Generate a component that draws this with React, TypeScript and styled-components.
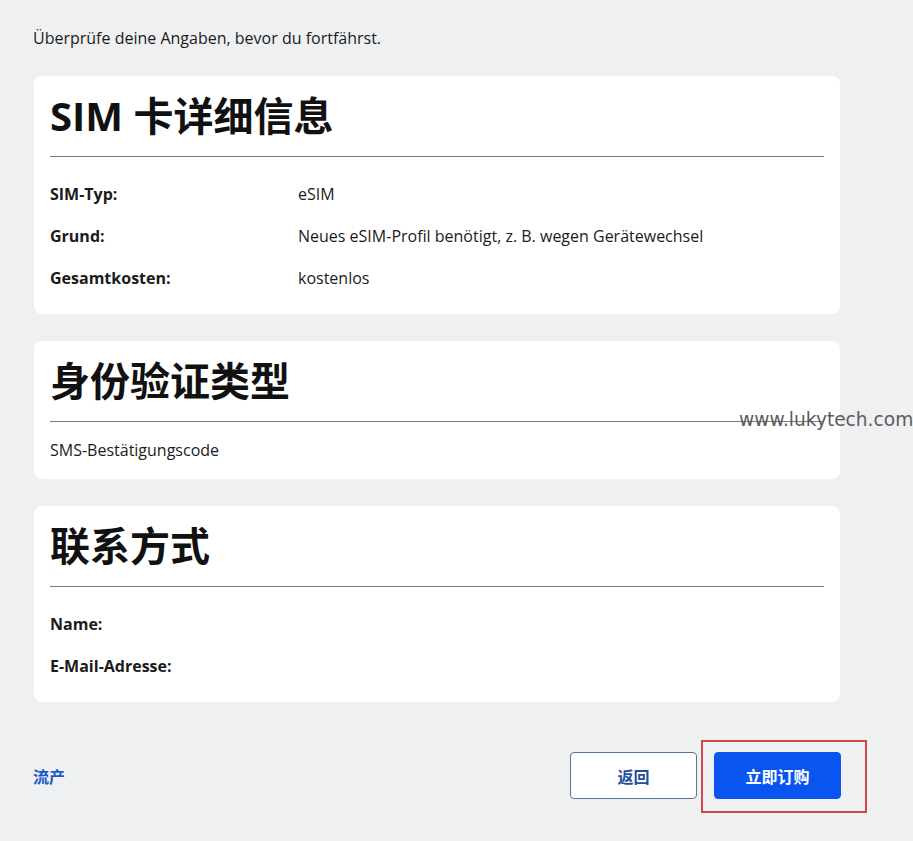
import styled, { createGlobalStyle } from 'styled-components';

const GlobalStyle = createGlobalStyle`
  html, body {
    margin: 0;
    padding: 0;
    background: #eff0f2;
  }
  body {
    font-family: 'Open Sans', 'Noto Sans CJK SC', sans-serif;
    color: #1b1b1b;
  }
`;

const rows = [
  { label: 'SIM-Typ:', value: 'eSIM' },
  { label: 'Grund:', value: 'Neues eSIM-Profil benötigt, z. B. wegen Gerätewechsel' },
  { label: 'Gesamtkosten:', value: 'kostenlos' },
];

const contactRows = [
  { label: 'Name:', value: '' },
  { label: 'E-Mail-Adresse:', value: '' },
];

const App = () => {
  return (
    <Page>
      <GlobalStyle />
      <Intro>Überprüfe deine Angaben, bevor du fortfährst.</Intro>
      <Cards>
        <Card>
          <CardTitle>SIM 卡详细信息</CardTitle>
          <Divider />
          {rows.map((row) => (
            <Row key={row.label}>
              <Label>{row.label}</Label>
              <Value>{row.value}</Value>
            </Row>
          ))}
        </Card>
        <Card>
          <CardTitle>身份验证类型</CardTitle>
          <Divider />
          <PlainText>SMS-Bestätigungscode</PlainText>
        </Card>
        <Card>
          <CardTitle>联系方式</CardTitle>
          <Divider />
          {contactRows.map((row) => (
            <Row key={row.label}>
              <Label>{row.label}</Label>
              <Value>{row.value}</Value>
            </Row>
          ))}
        </Card>
      </Cards>
      <Footer>
        <CancelLink href="#">流产</CancelLink>
        <Actions>
          <Button>返回</Button>
          <Highlighted>
            <Button $primary>立即订购</Button>
          </Highlighted>
        </Actions>
      </Footer>
      <Watermark>www.lukytech.com</Watermark>
    </Page>
  );
};

export default App;

const Page = styled.div`
  position: relative;
  width: 806px;
  padding: 26px 0 40px 34px;
`;

const Intro = styled.p`
  margin: 0 0 26px -1px;
  font-size: 16px;
  line-height: 24px;
  color: #1b1b1b;
`;

const Cards = styled.div`
  display: flex;
  flex-direction: column;
  gap: 27px;
`;

const Card = styled.section`
  background: #ffffff;
  border-radius: 8px;
  padding: 16px 16px 15px 16px;
`;

const CardTitle = styled.h2`
  margin: 0;
  font-size: 40px;
  line-height: 48px;
  font-weight: 700;
  font-family: 'Open Sans', 'Noto Sans CJK SC', sans-serif;
  color: #111111;
`;

const Divider = styled.hr`
  margin: 16px 0 16px 0;
  border: none;
  border-top: 1px solid #7c7c7c;
`;

const Row = styled.div`
  display: grid;
  grid-template-columns: 248px 1fr;
  padding: 9px 0;
  font-size: 16px;
  line-height: 24px;
`;

const Label = styled.span`
  font-weight: 700;
  color: #1b1b1b;
`;

const Value = styled.span`
  color: #1b1b1b;
`;

const PlainText = styled.p`
  margin: 0 0 2px 0;
  font-size: 16px;
  line-height: 24px;
`;

const Footer = styled.div`
  display: flex;
  align-items: center;
  justify-content: space-between;
  margin-top: 50px;
`;

const CancelLink = styled.a`
  margin-left: -1px;
  font-size: 16px;
  font-weight: 700;
  color: #1d58c7;
  text-decoration: none;
`;

const Actions = styled.div`
  display: flex;
  gap: 17px;
  margin-right: -1px;
`;

const Highlighted = styled.div`
  position: relative;
  display: flex;

  &::after {
    content: '';
    position: absolute;
    left: -13px;
    top: -12px;
    right: -26px;
    bottom: -14px;
    border: 2px solid #cf4a4a;
    pointer-events: none;
  }
`;

const Button = styled.button<{ $primary?: boolean }>`
  width: 127px;
  height: 47px;
  border-radius: 4px;
  font-family: 'Open Sans', 'Noto Sans CJK SC', sans-serif;
  font-size: 16px;
  font-weight: 700;
  cursor: pointer;
  border: 1px solid ${(p) => (p.$primary ? '#0a55ef' : '#55739f')};
  background: ${(p) => (p.$primary ? '#0a55ef' : '#ffffff')};
  color: ${(p) => (p.$primary ? '#ffffff' : '#23509a')};
`;

const Watermark = styled.span`
  position: absolute;
  left: 739px;
  top: 407px;
  font-family: 'DejaVu Sans', sans-serif;
  font-size: 18.6px;
  line-height: 26px;
  color: #5c5c5c;
  white-space: nowrap;
`;
